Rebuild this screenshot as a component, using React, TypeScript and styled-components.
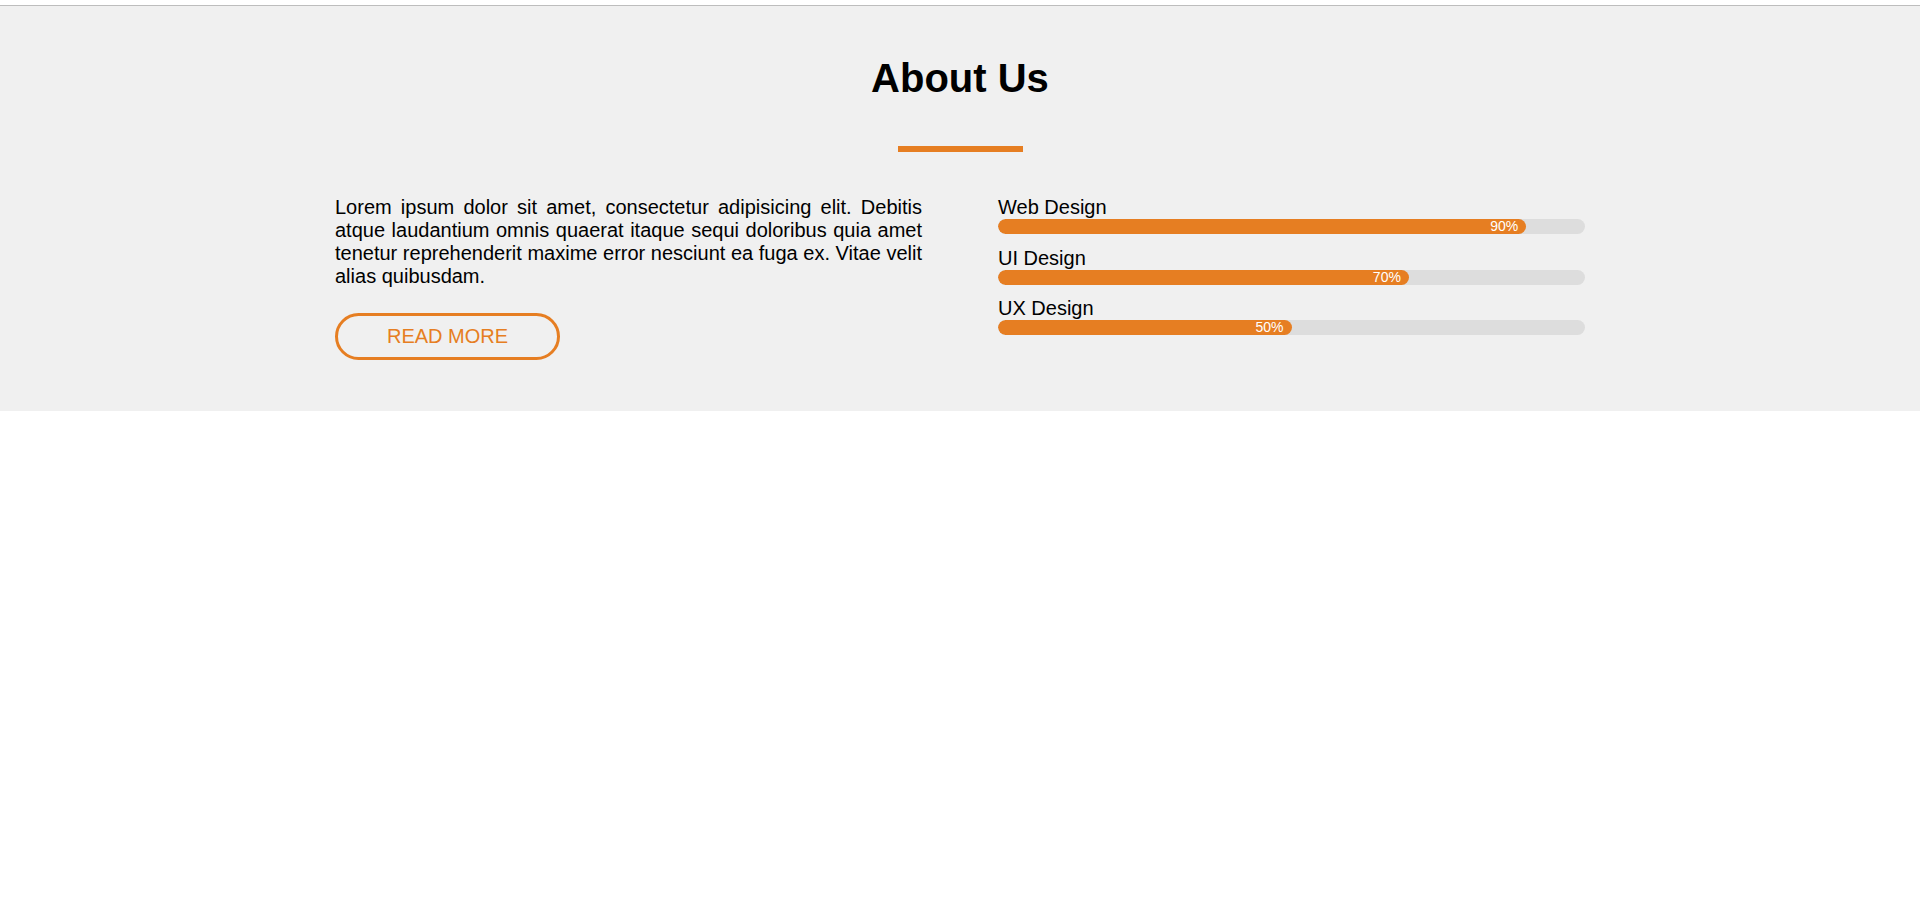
import React from "react";
import styled, { createGlobalStyle } from "styled-components";

const GlobalStyle = createGlobalStyle`
  html, body {
    margin: 0;
    padding: 0;
    background: #ffffff;
  }
  body {
    font-family: "Liberation Sans", Arial, Helvetica, sans-serif;
    color: #000;
  }
`;

const ORANGE = "#e67e22";

const Section = styled.section`
  margin-top: 5px;
  border-top: 1px solid #bdbdbd;
  background: #f0f0f0;
  padding: 49px 0 51px;
`;

const Title = styled.h2`
  margin: 0;
  text-align: center;
  font-size: 40px;
  font-weight: 700;
  line-height: 46px;
  color: #000;
`;

const Divider = styled.div`
  width: 125px;
  height: 6px;
  background: ${ORANGE};
  margin: 45px auto 44px;
`;

const Content = styled.div`
  width: 1250px;
  margin: 0 auto;
  display: flex;
  justify-content: space-between;
  align-items: flex-start;
`;

const Column = styled.div`
  width: 587px;
`;

const Text = styled.p`
  margin: 0;
  font-size: 20px;
  line-height: 23px;
  text-align: justify;
  color: #000;
`;

const Button = styled.button`
  margin-top: 25px;
  box-sizing: border-box;
  width: 225px;
  height: 47px;
  padding: 0;
  border: 3px solid ${ORANGE};
  border-radius: 25px;
  background: transparent;
  color: ${ORANGE};
  font-family: "Liberation Sans", Arial, Helvetica, sans-serif;
  font-size: 20px;
  line-height: 23px;
  text-transform: uppercase;
  cursor: pointer;
`;

const Skill = styled.div`
  margin-bottom: 12.5px;
`;

const Label = styled.div`
  font-size: 20px;
  line-height: 23px;
  color: #000;
`;

const Track = styled.div`
  height: 15px;
  border-radius: 8px;
  background: #dddddd;
  overflow: hidden;
`;

const Fill = styled.div`
  height: 100%;
  box-sizing: border-box;
  border-radius: 8px;
  background: ${ORANGE};
  display: flex;
  align-items: center;
  justify-content: flex-end;
  padding-right: 8px;
  color: #fff;
  font-size: 14px;
  line-height: 15px;
`;

const skills = [
  { name: "Web Design", value: 90 },
  { name: "UI Design", value: 70 },
  { name: "UX Design", value: 50 },
];

export default function App() {
  return (
    <>
      <GlobalStyle />
      <Section>
        <Title>About Us</Title>
        <Divider />
        <Content>
          <Column>
            <Text>
              Lorem ipsum dolor sit amet, consectetur adipisicing elit. Debitis
              atque laudantium omnis quaerat itaque sequi doloribus quia amet
              tenetur reprehenderit maxime error nesciunt ea fuga ex. Vitae velit
              alias quibusdam.
            </Text>
            <Button>Read More</Button>
          </Column>
          <Column>
            {skills.map((s) => (
              <Skill key={s.name}>
                <Label>{s.name}</Label>
                <Track>
                  <Fill style={{ width: `${s.value}%` }}>{s.value}%</Fill>
                </Track>
              </Skill>
            ))}
          </Column>
        </Content>
      </Section>
    </>
  );
}
